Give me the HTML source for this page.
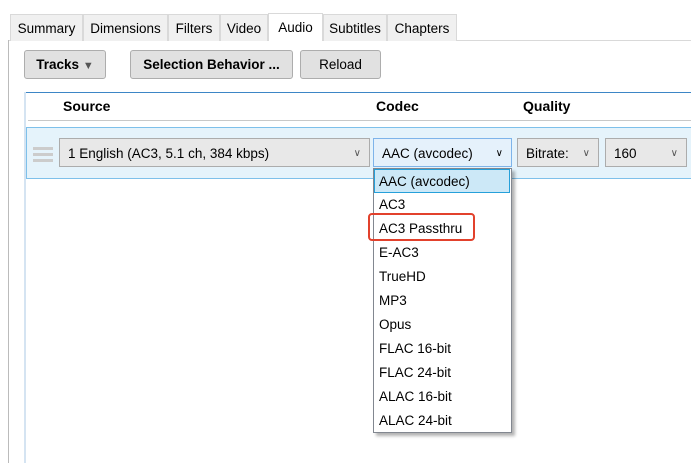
<!DOCTYPE html>
<html><head><style>
body{margin:0;width:691px;height:463px;background:#fff;font-family:"Liberation Sans",sans-serif;font-size:13px;color:#000;position:relative;overflow:hidden}
.a{position:absolute;box-sizing:border-box}
.tab{position:absolute;top:14px;height:27px;background:#f0f0f0;border:1px solid #d9d9d9;border-bottom:none;box-sizing:border-box;text-align:center;line-height:27px;font-size:13.5px}
.btn{position:absolute;top:50px;height:29px;background:#e1e1e1;border:1px solid #adadad;border-radius:3px;box-sizing:border-box;text-align:center;line-height:28px;font-size:13.5px}
.dd{position:absolute;top:138px;height:29px;background:#e8e8e8;border:1px solid #acacac;box-sizing:border-box;line-height:29px;padding-left:8px;font-size:13.5px}
.chev{position:absolute;right:8px;top:0;font-size:10px;color:#555}
.it{position:absolute;left:374px;width:136px;height:24px;line-height:26px;padding-left:5px;box-sizing:border-box;font-size:13.5px}
</style></head><body>
<div class="a" style="left:8px;top:40px;width:683px;height:1px;background:#d9d9d9"></div>
<div class="a" style="left:8px;top:40px;width:1px;height:423px;background:#bbb"></div>
<div class="tab" style="left:10px;width:73px">Summary</div>
<div class="tab" style="left:83px;width:85px">Dimensions</div>
<div class="tab" style="left:168px;width:52px">Filters</div>
<div class="tab" style="left:220px;width:48px">Video</div>
<div class="tab" style="left:268px;width:55px;top:13px;height:28px;background:#fff;line-height:28px">Audio</div>
<div class="tab" style="left:323px;width:64px">Subtitles</div>
<div class="tab" style="left:387px;width:70px">Chapters</div>
<div class="btn" style="left:24px;width:82px;font-weight:bold">Tracks <span style="font-size:11px;color:#555">▼</span></div>
<div class="btn" style="left:130px;width:163px;font-weight:bold">Selection Behavior ...</div>
<div class="btn" style="left:300px;width:81px">Reload</div>
<div class="a" style="left:25px;top:92px;width:666px;height:1px;background:#3d86c6"></div>
<div class="a" style="left:24px;top:92px;width:2px;height:371px;background:#d5e4f2"></div>
<div class="a" style="left:63px;top:98px;font-weight:bold;font-size:14px">Source</div>
<div class="a" style="left:376px;top:98px;font-weight:bold;font-size:14px">Codec</div>
<div class="a" style="left:523px;top:98px;font-weight:bold;font-size:14px">Quality</div>
<div class="a" style="left:28px;top:120px;width:663px;height:1px;background:#c8c8c8"></div>
<div class="a" style="left:26px;top:127px;width:666px;height:52px;background:#e5f3fb;border:1px solid #7ec0ea"></div>
<div class="a" style="left:33px;top:147px;width:20px;height:3px;background:#ccc"></div>
<div class="a" style="left:33px;top:153px;width:20px;height:3px;background:#ccc"></div>
<div class="a" style="left:33px;top:159px;width:20px;height:3px;background:#ccc"></div>
<div class="dd" style="left:59px;width:311px">1 English (AC3, 5.1 ch, 384 kbps)<span class="chev">&#8744;</span></div>
<div class="dd" style="left:373px;width:139px;background:#e5f1fb;border-color:#7eb4ea">AAC (avcodec)<span class="chev" style="color:#000">&#8744;</span></div>
<div class="dd" style="left:517px;width:82px">Bitrate:<span class="chev">&#8744;</span></div>
<div class="dd" style="left:605px;width:82px">160<span class="chev">&#8744;</span></div>
<div class="a" style="left:373px;top:168px;width:139px;height:265px;background:#fff;border:1px solid #828790;box-shadow:3px 3px 3px rgba(0,0,0,0.3)"></div>
<div class="it" style="top:169px;background:#cce8f7;border:1px solid #26a0da;height:24px;line-height:23px;padding-left:4px;left:374px">AAC (avcodec)</div>
<div class="it" style="top:192px">AC3</div>
<div class="it" style="top:216px">AC3 Passthru</div>
<div class="it" style="top:240px">E-AC3</div>
<div class="it" style="top:264px">TrueHD</div>
<div class="it" style="top:288px">MP3</div>
<div class="it" style="top:312px">Opus</div>
<div class="it" style="top:336px">FLAC 16-bit</div>
<div class="it" style="top:360px">FLAC 24-bit</div>
<div class="it" style="top:384px">ALAC 16-bit</div>
<div class="it" style="top:408px">ALAC 24-bit</div>
<div class="a" style="left:368px;top:213px;width:107px;height:28px;border:2px solid #e2412c;border-radius:4px"></div>
</body></html>
